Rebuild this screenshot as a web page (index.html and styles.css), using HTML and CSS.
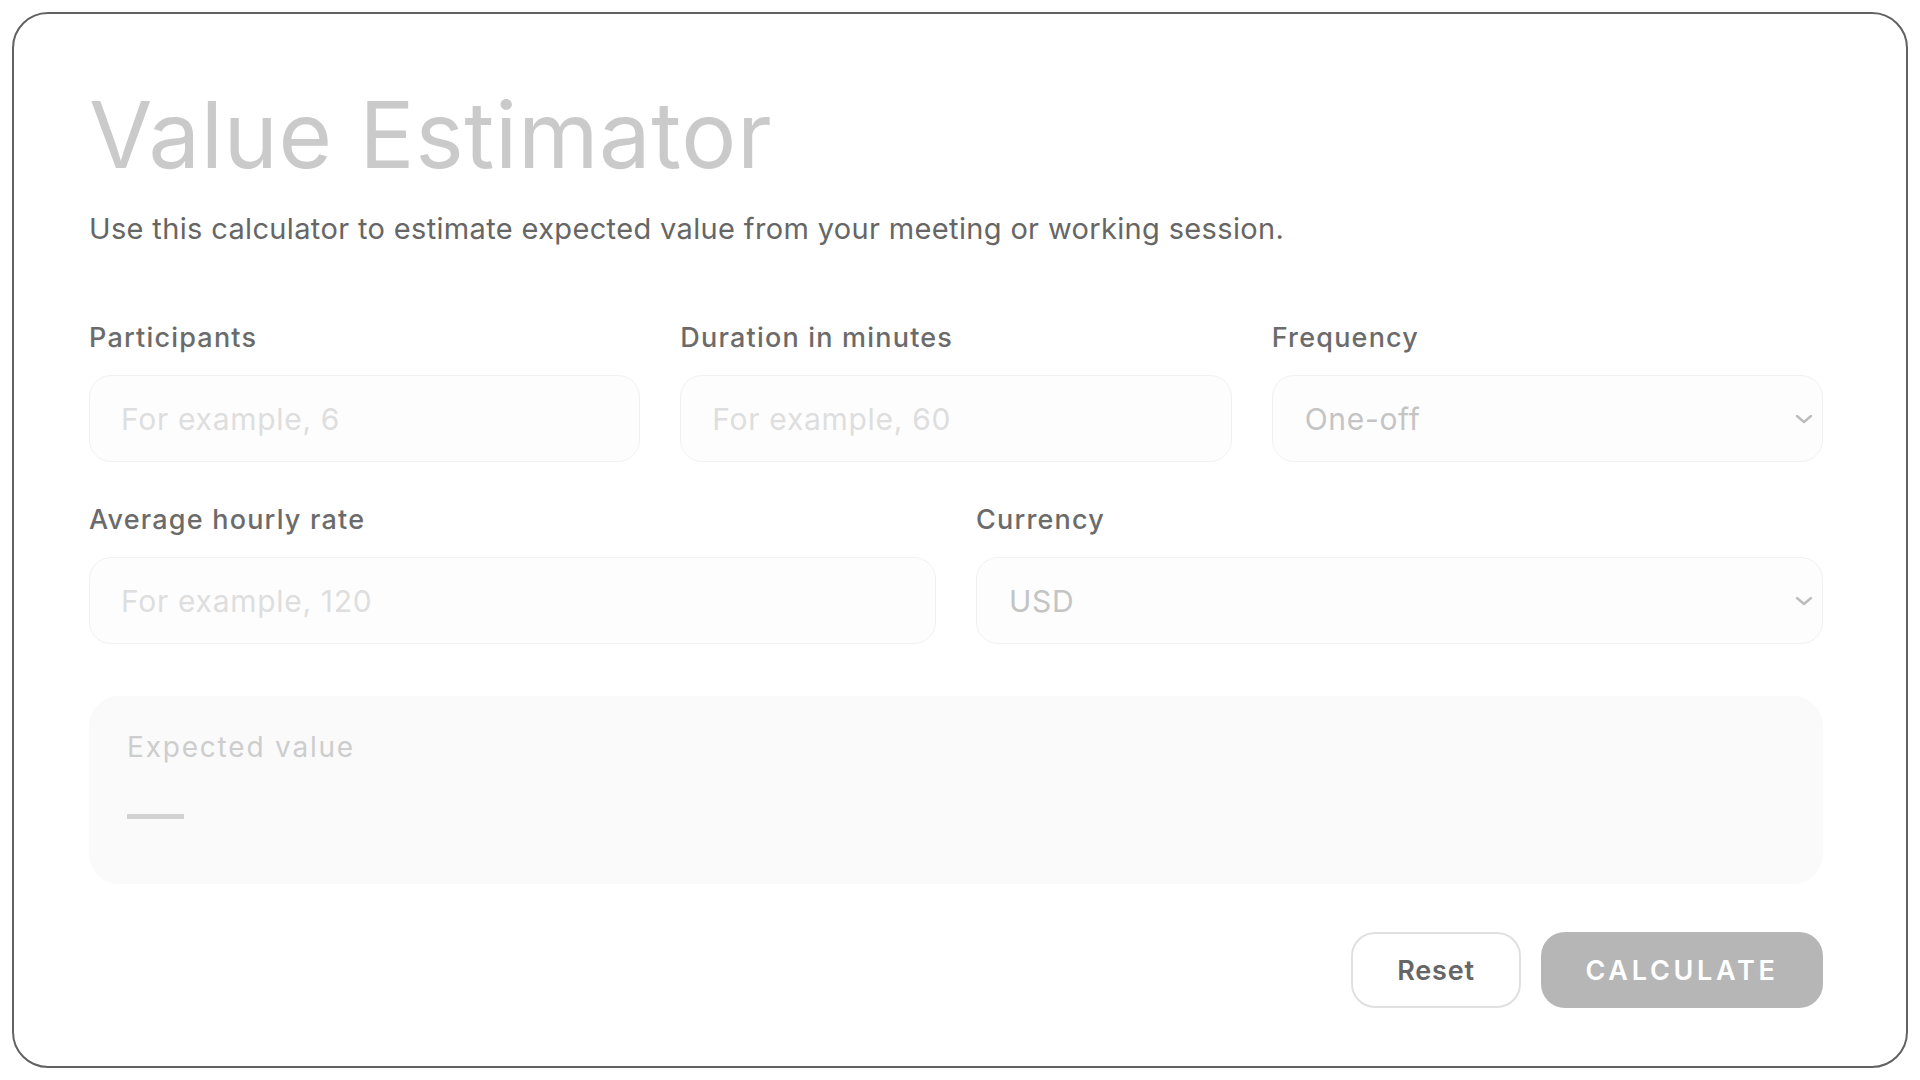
FILE: index.html
```html
<!DOCTYPE html>
<html lang="en">
<head>
<meta charset="utf-8">
<title>Value Estimator</title>
<link rel="stylesheet" href="styles.css">
</head>
<body>
<main class="card">
  <h1 class="title">Value Estimator</h1>
  <p class="subtitle">Use this calculator to estimate expected value from your meeting or working session.</p>

  <div class="row row-3">
    <div class="field">
      <label class="label" for="participants">Participants</label>
      <input class="control" id="participants" type="text" placeholder="For example, 6">
    </div>
    <div class="field">
      <label class="label" for="duration">Duration in minutes</label>
      <input class="control" id="duration" type="text" placeholder="For example, 60">
    </div>
    <div class="field">
      <label class="label" for="frequency">Frequency</label>
      <div class="select-wrap">
        <select class="control select" id="frequency">
          <option>One-off</option>
          <option>Weekly</option>
          <option>Monthly</option>
        </select>
        <svg class="chevron" width="18" height="10" viewBox="0 0 18 10" aria-hidden="true"><path d="M2 2 L9 8 L16 2" fill="none" stroke="#bcbcbc" stroke-width="2.4" stroke-linecap="round" stroke-linejoin="round"/></svg>
      </div>
    </div>
  </div>

  <div class="row row-2">
    <div class="field">
      <label class="label" for="rate">Average hourly rate</label>
      <input class="control" id="rate" type="text" placeholder="For example, 120">
    </div>
    <div class="field">
      <label class="label" for="currency">Currency</label>
      <div class="select-wrap">
        <select class="control select" id="currency">
          <option>USD</option>
          <option>EUR</option>
          <option>GBP</option>
        </select>
        <svg class="chevron" width="18" height="10" viewBox="0 0 18 10" aria-hidden="true"><path d="M2 2 L9 8 L16 2" fill="none" stroke="#bcbcbc" stroke-width="2.4" stroke-linecap="round" stroke-linejoin="round"/></svg>
      </div>
    </div>
  </div>

  <section class="result">
    <div class="result-label">Expected value</div>
    <div class="result-dash"></div>
  </section>

  <div class="actions">
    <button class="btn btn-reset" type="button">Reset</button>
    <button class="btn btn-calc" type="button">CALCULATE</button>
  </div>
</main>
</body>
</html>
```
FILE: styles.css
```css
* { box-sizing: border-box; }

html, body {
  margin: 0;
  padding: 0;
  background: #ffffff;
}

body {
  font-family: "Inter", "Liberation Sans", sans-serif;
  width: 1920px;
  height: 1080px;
  padding: 12px;
}

.card {
  width: 1896px;
  height: 1056px;
  border: 2px solid #626262;
  border-radius: 36px;
  background: #ffffff;
  padding: 70px 83px 58px 75px;
  display: flex;
  flex-direction: column;
}

.title {
  margin: 0;
  font-size: 92px;
  line-height: 101px;
  font-weight: 400;
  color: #cacaca;
  letter-spacing: 0.6px;
}

.subtitle {
  margin: 24px 0 0 0;
  font-size: 29px;
  line-height: 39px;
  color: #666666;
  letter-spacing: 0.35px;
}

.row {
  display: grid;
  column-gap: 40px;
}

.row-3 {
  grid-template-columns: repeat(3, 1fr);
  margin-top: 72px;
}

.row-2 {
  grid-template-columns: 1fr 1fr;
  margin-top: 40px;
}

.field {
  display: flex;
  flex-direction: column;
  gap: 20px;
}

.label {
  font-size: 27px;
  line-height: 35px;
  font-weight: 500;
  color: #6b6b6b;
  letter-spacing: 1.2px;
}

.control {
  width: 100%;
  height: 87px;
  border: 1.5px solid #f1f1f1;
  border-radius: 22px;
  background: #fdfdfd;
  padding: 0 31px;
  font-family: "Inter", "Liberation Sans", sans-serif;
  font-size: 30px;
  letter-spacing: 0.7px;
  color: #c4c4c4;
  outline: none;
}

.control::placeholder {
  color: #dedede;
  opacity: 1;
}

.select-wrap {
  position: relative;
}

.select {
  appearance: none;
  -webkit-appearance: none;
  padding-left: 32px;
}

.chevron {
  position: absolute;
  right: 10px;
  top: 39px;
}

.result {
  margin-top: 52px;
  height: 188px;
  border-radius: 30px;
  background: #fafafa;
  padding: 33px 38px 0 38px;
}

.result-label {
  font-size: 28px;
  line-height: 36px;
  color: #cdcdcd;
  letter-spacing: 1.8px;
}

.result-dash {
  margin-top: 49px;
  width: 57px;
  height: 5px;
  background: #d2d2d2;
}

.actions {
  margin-top: 48px;
  display: flex;
  justify-content: flex-end;
  gap: 20px;
}

.btn {
  height: 76px;
  border-radius: 24px;
  font-family: "Inter", "Liberation Sans", sans-serif;
  font-size: 27px;
  font-weight: 600;
  cursor: pointer;
}

.btn-reset {
  width: 170px;
  background: #ffffff;
  border: 2px solid #e0e0e0;
  color: #666666;
  letter-spacing: 0.8px;
}

.btn-calc {
  width: 282px;
  background: #b6b6b6;
  border: none;
  color: #ffffff;
  letter-spacing: 3.7px;
}
```
